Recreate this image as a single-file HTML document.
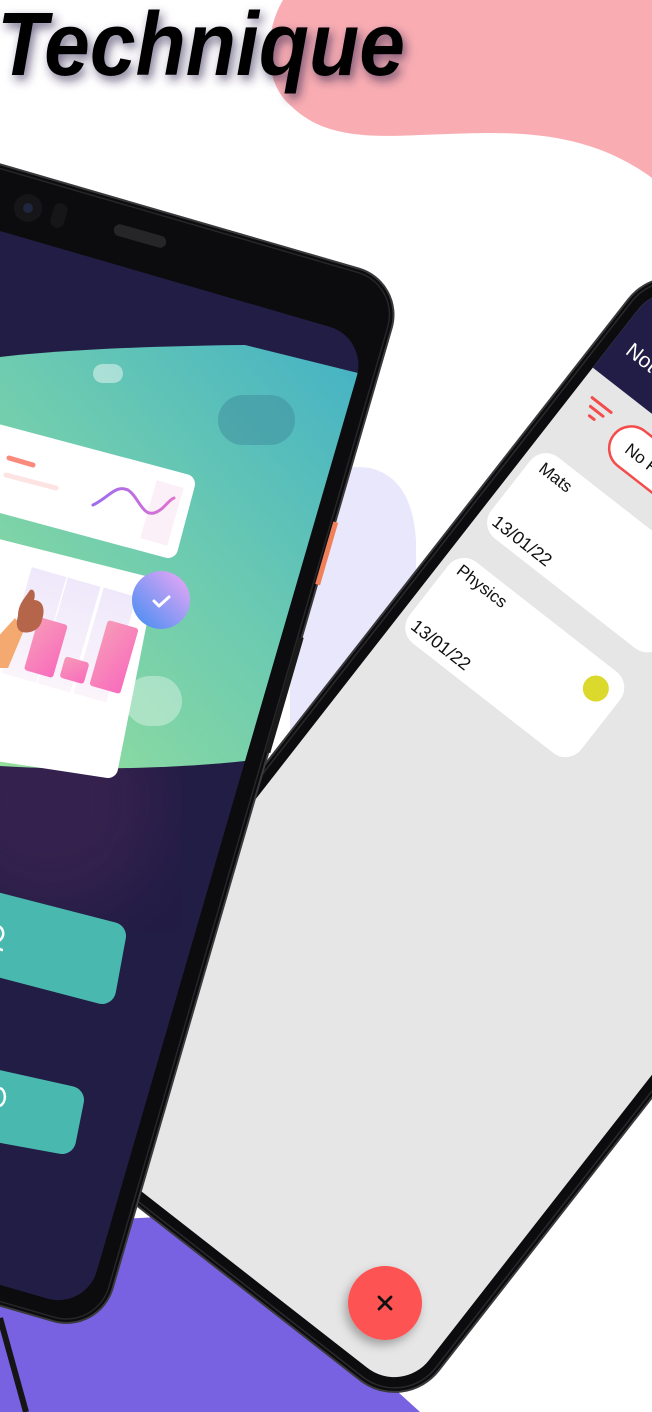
<!DOCTYPE html>
<html><head><meta charset="utf-8"><style>
html,body{margin:0;padding:0;background:#fff;}
svg{display:block;}
</style></head><body>
<svg width="652" height="1412" viewBox="0 0 652 1412" xmlns="http://www.w3.org/2000/svg">
<defs>
  <filter id="tsh" x="-10%" y="-30%" width="130%" height="170%">
    <feDropShadow dx="3" dy="5" stdDeviation="5" flood-color="#2e2150" flood-opacity="0.65"/>
  </filter>
  <filter id="blur30"><feGaussianBlur stdDeviation="35"/></filter>
  <filter id="fabsh" x="-50%" y="-50%" width="200%" height="200%">
    <feDropShadow dx="-3" dy="5" stdDeviation="5" flood-color="#000" flood-opacity="0.3"/>
  </filter>
  <linearGradient id="green" x1="1" y1="0" x2="0" y2="1">
    <stop offset="0" stop-color="#43b1c6"/>
    <stop offset="0.5" stop-color="#6dcbb0"/>
    <stop offset="1" stop-color="#95df9c"/>
  </linearGradient>
  <linearGradient id="chk" x1="0" y1="1" x2="1" y2="0">
    <stop offset="0" stop-color="#3f8cf2"/>
    <stop offset="1" stop-color="#f0a8f6"/>
  </linearGradient>
  <linearGradient id="bar" x1="0" y1="0" x2="1" y2="1">
    <stop offset="0" stop-color="#f79ab8"/>
    <stop offset="1" stop-color="#f86cbd"/>
  </linearGradient>
  <linearGradient id="wave" x1="0" y1="0" x2="1" y2="0">
    <stop offset="0" stop-color="#9c6cf0"/>
    <stop offset="1" stop-color="#e072d0"/>
  </linearGradient>
  <linearGradient id="col" x1="0" y1="0" x2="0" y2="1">
    <stop offset="0" stop-color="#efe8fb"/>
    <stop offset="1" stop-color="#fbf4fb"/>
  </linearGradient>
  <clipPath id="lscreen">
    <rect transform="translate(405,282) rotate(16.2)" x="-520" y="64" width="500" height="1012" rx="40"/>
  </clipPath>
  <clipPath id="rscreen">
    <rect x="14" y="14" width="482" height="1045" rx="44"/>
  </clipPath>
</defs>

<path d="M283 0 C265 30 262 80 290 105 C320 135 360 138 420 135 C500 132 580 125 652 178 L652 0 Z" fill="#f9adb2"/>
<path d="M290 490 Q330 462 370 468 Q412 478 416 540 L416 780 L290 780 Z" fill="#e8e7fb"/>
<polygon points="0,1225 200,1215 330,1330 420,1412 0,1412" fill="#7862e2"/>

<text x="-3" y="75" font-family="Liberation Sans, sans-serif" font-size="90" font-weight="bold" font-style="italic" textLength="408" lengthAdjust="spacingAndGlyphs" fill="#050505" filter="url(#tsh)">Technique</text>

<g transform="translate(663,255) rotate(38)">
  <rect x="0" y="0" width="510" height="1073" rx="56" fill="#0c0c0e" stroke="#3a3a3c" stroke-width="2"/>
  <rect x="4" y="4" width="502" height="1065" rx="52" fill="none" stroke="#2a2a2c" stroke-width="1.5"/>
  <rect x="14" y="14" width="482" height="1045" rx="44" fill="#e6e6e6"/>
  <g clip-path="url(#rscreen)">
    <rect x="0" y="0" width="520" height="132" fill="#221d47"/>
    <text x="30" y="101" font-family="Liberation Sans, sans-serif" font-size="21" fill="#fff">Notes</text>
    <g stroke="#f44b4b" stroke-width="3" stroke-linecap="round">
      <line x1="32" y1="156" x2="56" y2="156"/>
      <line x1="36" y1="164" x2="52" y2="164"/>
      <line x1="41" y1="172" x2="47" y2="172"/>
    </g>
    <rect x="72" y="150" width="130" height="44" rx="22" fill="#fff" stroke="#f44b4b" stroke-width="2.5"/>
    <text x="90" y="179" font-family="Liberation Sans, sans-serif" font-size="17" fill="#111">No Filter</text>
    <rect x="22" y="224" width="218" height="103" rx="20" fill="#fff"/>
    <text x="34" y="247" font-family="Liberation Sans, sans-serif" font-size="17" fill="#111">Mats</text>
    <text x="30" y="318" font-family="Liberation Sans, sans-serif" font-size="18" fill="#111">13/01/22</text>
    <rect x="22" y="357" width="218" height="103" rx="20" fill="#fff"/>
    <text x="32" y="378" font-family="Liberation Sans, sans-serif" font-size="17" fill="#111">Physics</text>
    <text x="30" y="450" font-family="Liberation Sans, sans-serif" font-size="18" fill="#111">13/01/22</text>
    <circle cx="214" cy="383" r="13" fill="#dbd92c"/>
    <rect x="265" y="224" width="218" height="103" rx="20" fill="#fff"/>
  </g>
</g>

<circle cx="385" cy="1303" r="37" fill="#fe5252" filter="url(#fabsh)"/>
<g stroke="#111" stroke-width="2.8" stroke-linecap="round">
  <line x1="379" y1="1297" x2="391" y2="1309"/>
  <line x1="391" y1="1297" x2="379" y2="1309"/>
</g>

<line x1="0" y1="1318" x2="26" y2="1412" stroke="#151515" stroke-width="6"/>
<g transform="translate(405,282) rotate(16.2)">
  <rect x="-520" y="0" width="520" height="1096" rx="48" fill="#0c0c0e" stroke="#3a3a3c" stroke-width="2"/>
  <rect x="-516" y="4" width="512" height="1088" rx="44" fill="none" stroke="#262628" stroke-width="1.5"/>
  <rect x="-520" y="64" width="500" height="1012" rx="40" fill="#221d45"/>
  <rect x="-2" y="250" width="5" height="65" fill="#f0805a"/>
  <rect x="-3" y="370" width="5" height="120" fill="#1a1a1a"/>
</g>
<circle cx="28" cy="208" r="14" fill="#161618"/>
<circle cx="28" cy="208" r="5" fill="#1e2640"/>
<rect x="52" y="203" width="14" height="25" rx="7" fill="#161618" transform="rotate(16 59 215)"/>
<rect x="113" y="230" width="54" height="12" rx="6" fill="#262628" transform="rotate(16 140 236)"/>

<g clip-path="url(#lscreen)">
  <circle cx="50" cy="800" r="110" fill="#5a2c5e" opacity="0.35" filter="url(#blur30)"/>
  <path d="M0 357 C60 350 150 346 245 345 L370 376 L370 715 L253 760 C170 770 60 770 0 766 Z" fill="url(#green)"/>
  <rect x="93" y="364" width="30" height="19" rx="9.5" fill="#fff" opacity="0.45"/>
  <rect x="218" y="395" width="77" height="50" rx="25" fill="#3f8f9e" opacity="0.55"/>
  <rect x="125" y="676" width="57" height="50" rx="25" fill="#fff" opacity="0.35"/>
  <polygon points="-10,432 185,484 168,548 -10,500" fill="#fff" stroke="#fff" stroke-width="20" stroke-linejoin="round"/>
  <line x1="9" y1="458" x2="33" y2="465" stroke="#f98a7c" stroke-width="5" stroke-linecap="round"/>
  <line x1="6" y1="475" x2="56" y2="488" stroke="#fde3e2" stroke-width="5" stroke-linecap="round"/>
  <rect x="148" y="483" width="28" height="60" fill="#fbeff8" transform="rotate(16 162 513)"/>
  <path d="M93 505 C108 498 116 484 128 490 C138 496 142 516 154 513 C164 510 168 500 174 498" fill="none" stroke="url(#wave)" stroke-width="3" stroke-linecap="round"/>
  <polygon points="-10,547 144,586 108,768 -10,750" fill="#fff" stroke="#fff" stroke-width="20" stroke-linejoin="round"/>
  <rect x="16" y="570" width="36" height="110" fill="url(#col)" transform="rotate(16 34 625)"/>
  <rect x="52" y="580" width="34" height="110" fill="url(#col)" transform="rotate(16 69 635)"/>
  <rect x="88" y="590" width="34" height="110" fill="url(#col)" transform="rotate(16 105 645)"/>
  <rect x="31" y="620" width="30" height="55" rx="3" fill="url(#bar)" transform="rotate(16 46 647)"/>
  <rect x="62" y="659" width="25" height="22" rx="3" fill="url(#bar)" transform="rotate(16 74 670)"/>
  <rect x="98" y="623" width="32" height="68" rx="3" fill="url(#bar)" transform="rotate(16 114 657)"/>
  <path d="M-5 640 L15 618 L24 630 L8 668 L-5 668 Z" fill="#f3a96f"/>
  <path d="M18 616 C18 604 25 598 30 590 C34 588 36 594 34 600 C42 600 46 608 42 620 C40 630 30 634 22 632 C16 630 16 622 18 616 Z" fill="#b5654a"/>
  <circle cx="161" cy="600" r="29" fill="url(#chk)"/>
  <path d="M154 601 L159 606 L169 597" fill="none" stroke="#fff" stroke-width="3" stroke-linecap="round" stroke-linejoin="round"/>
  <polygon points="-20,902 112,936 102,990 -20,958" fill="#49b9b0" stroke="#49b9b0" stroke-width="28" stroke-linejoin="round"/>
  <polygon points="-20,1080 70,1100 62,1140 -20,1125" fill="#49b9b0" stroke="#49b9b0" stroke-width="28" stroke-linejoin="round"/>
  <path d="M-2 926 C4 928 5 936 0 940 C-4 944 -2 950 3 950" fill="none" stroke="#fff" stroke-width="2.5"/>
  <path d="M0 1088 C6 1090 7 1102 0 1106" fill="none" stroke="#fff" stroke-width="2.5"/>
</g>
</svg>
</body></html>
